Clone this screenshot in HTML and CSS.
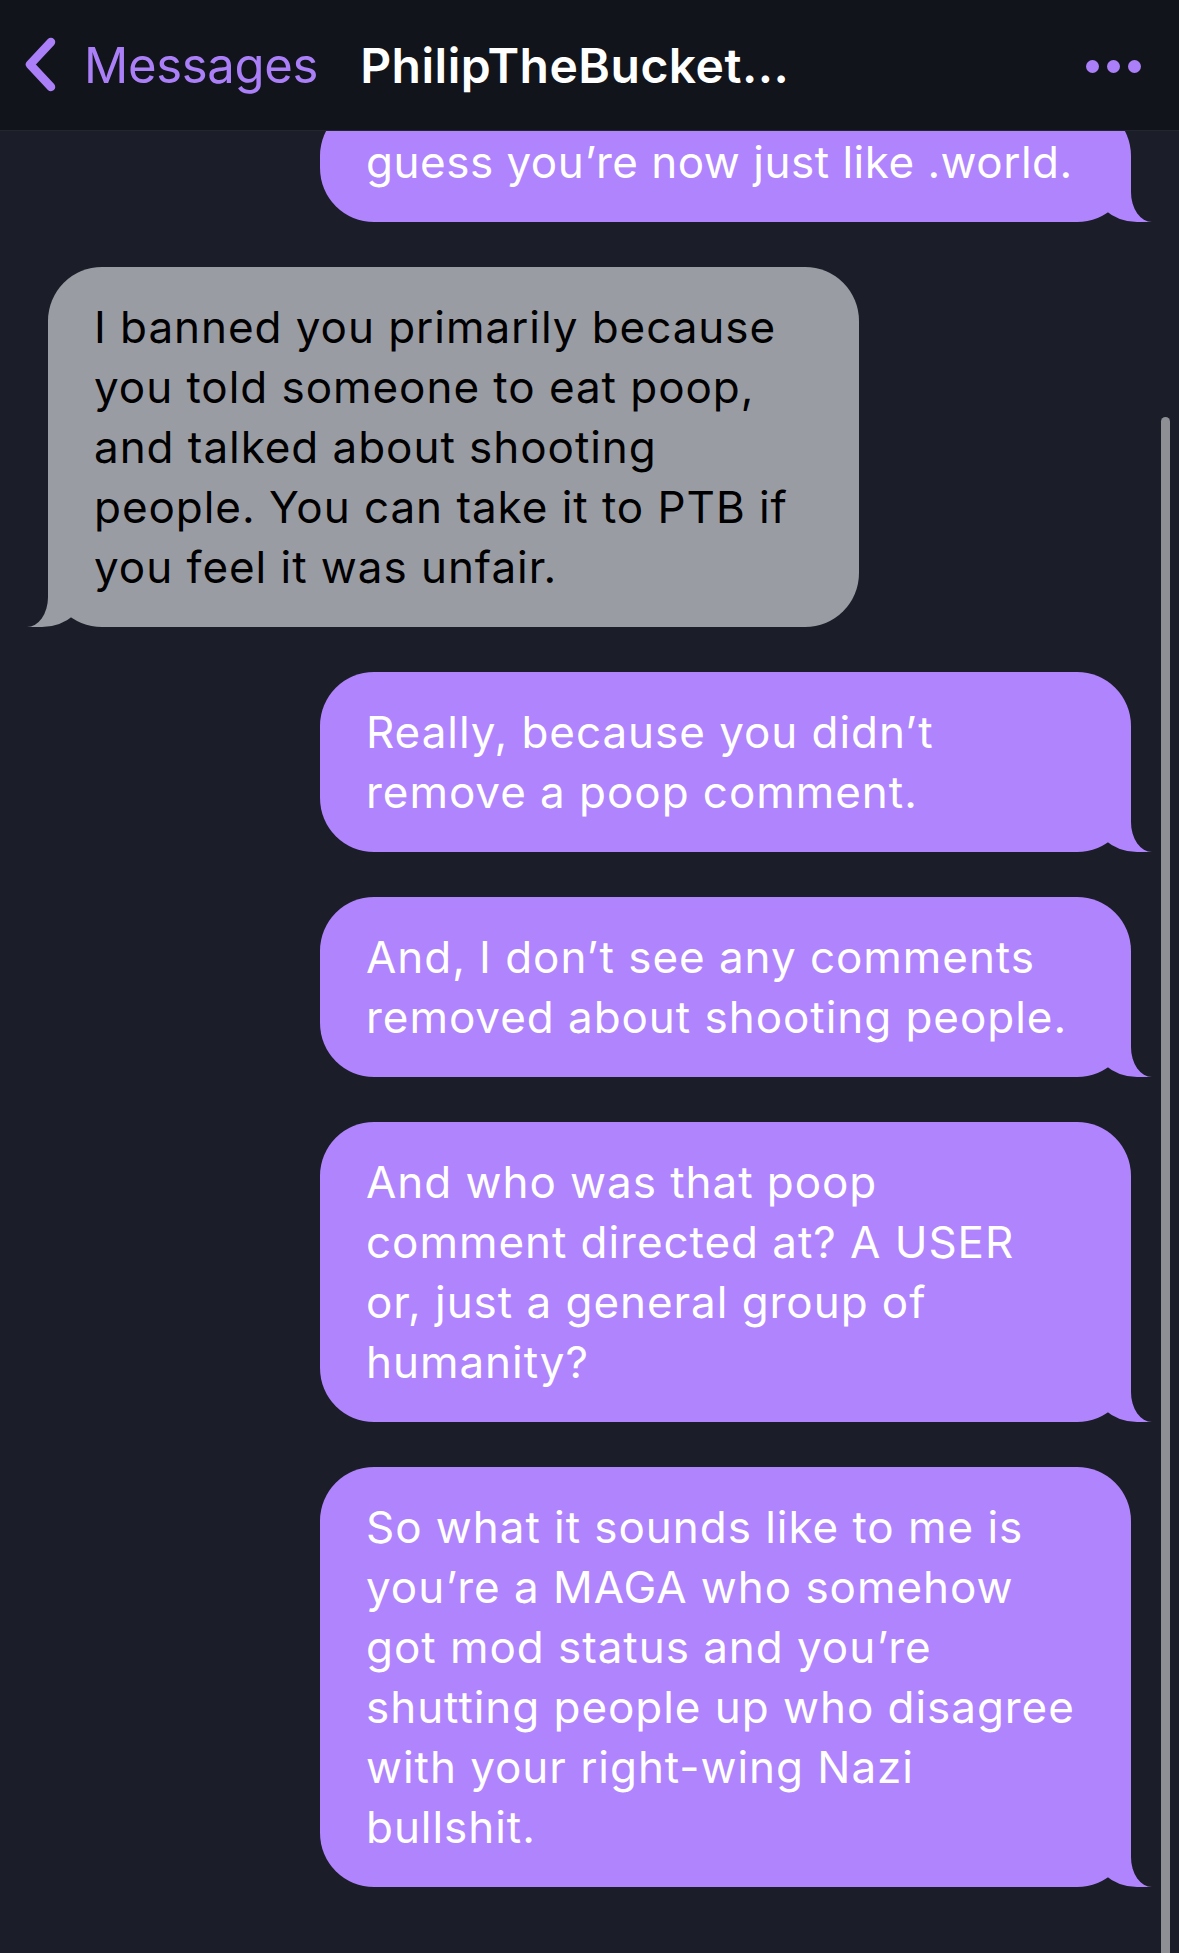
FILE: index.html
```html
<!DOCTYPE html>
<html lang="en">
<head>
    <meta charset="UTF-8">
    <meta name="viewport" content="width=device-width, initial-scale=1.0">
    <title>PhilipTheBucket - Messages</title>
    <link rel="stylesheet" href="styles.css">
</head>
<body>
    <div class="screen">
        <div class="nav-bar">
            <a class="back" href="#">
                <svg class="chevron" width="36" height="60" viewBox="0 0 36 60">
                    <path d="M29 7 L8 29.5 L29 52" fill="none" stroke="#ab7ff7" stroke-width="8.5" stroke-linecap="round" stroke-linejoin="round"/>
                </svg>
                <span>Messages</span>
            </a>
            <div class="title">PhilipTheBucket...</div>
            <div class="more">
                <span class="dot"></span>
                <span class="dot"></span>
                <span class="dot"></span>
            </div>
        </div>

        <div class="thread">
            <!-- tail end of an earlier message, scrolled under the nav bar -->
            <div class="bubble sent first">guess you’re now just like .world.</div>
            <div class="bubble received">I banned you primarily because you told someone to eat poop, and talked about shooting people. You can take it to PTB if you feel it was unfair.</div>
            <div class="bubble sent">Really, because you didn’t remove a poop comment.</div>
            <div class="bubble sent">And, I don’t see any comments removed about shooting people.</div>
            <div class="bubble sent">And who was that poop comment directed at? A USER or, just a general group of humanity?</div>
            <div class="bubble sent">So what it sounds like to me is you’re a MAGA who somehow got mod status and you’re shutting people up who disagree with your right-wing Nazi bullshit.</div>
        </div>

        <div class="scrollbar"></div>
    </div>
</body>
</html>
```

FILE: styles.css
```css
body {
    margin: 0;
    background: #1b1d29;
    font-family: Inter, "Noto Sans", sans-serif;
}
.screen {
    position: relative;
    height: 100vh;
    overflow: hidden;
    display: flex;
    flex-direction: column;
}
.nav-bar {
    height: 130px;
    flex-shrink: 0;
    background: #12141b;
    border-bottom: 1px solid #23252f;
    display: flex;
    align-items: center;
    padding: 0 38px 0 22px;
    position: relative;
    z-index: 2;
}
.back {
    display: flex;
    align-items: center;
    gap: 26px;
    color: #ab7ff7;
    text-decoration: none;
    font-size: 49px;
    letter-spacing: -0.3px;
}
.chevron {
    display: block;
}
.title {
    margin-left: 42px;
    color: #fff;
    font-size: 48px;
    font-weight: 600;
    letter-spacing: 0.5px;
}
.more {
    margin-left: auto;
    display: flex;
    gap: 8px;
    padding-top: 3px;
}
.dot {
    width: 13px;
    height: 13px;
    border-radius: 50%;
    background: #ab7ff7;
}
.thread {
    flex: 1;
    overflow: hidden;
    display: flex;
    flex-direction: column;
    gap: 45px;
    padding: 0 48px;
}
.bubble {
    position: relative;
    z-index: 0;
    box-sizing: border-box;
    width: 811px;
    padding: 30px 55px 30px 46px;
    border-radius: 54px;
    font-size: 44px;
    line-height: 60px;
    letter-spacing: 0.95px;
}
.bubble::before,
.bubble::after {
    content: "";
    position: absolute;
    bottom: 0;
    z-index: -1;
}
.bubble.first {
    margin-top: -29px;
    white-space: nowrap;
    letter-spacing: 0.5px;
}
.sent {
    align-self: flex-end;
    background: #b084fc;
    color: #fff;
}
.sent::before {
    right: -21px;
    width: 60px;
    height: 60px;
    background: #b084fc;
    border-bottom-left-radius: 45px 40px;
}
.sent::after {
    right: -30px;
    width: 30px;
    height: 62px;
    background: #1b1d29;
    border-bottom-left-radius: 21px 30px;
}
.received {
    align-self: flex-start;
    background: #9a9ca3;
    color: #000;
}
.received::before {
    left: -21px;
    width: 60px;
    height: 60px;
    background: #9a9ca3;
    border-bottom-right-radius: 45px 40px;
}
.received::after {
    left: -30px;
    width: 30px;
    height: 62px;
    background: #1b1d29;
    border-bottom-right-radius: 21px 30px;
}
.scrollbar {
    position: absolute;
    top: 417px;
    bottom: -10px;
    right: 9px;
    width: 9px;
    border-radius: 5px;
    background: #8e8f95;
}
```
